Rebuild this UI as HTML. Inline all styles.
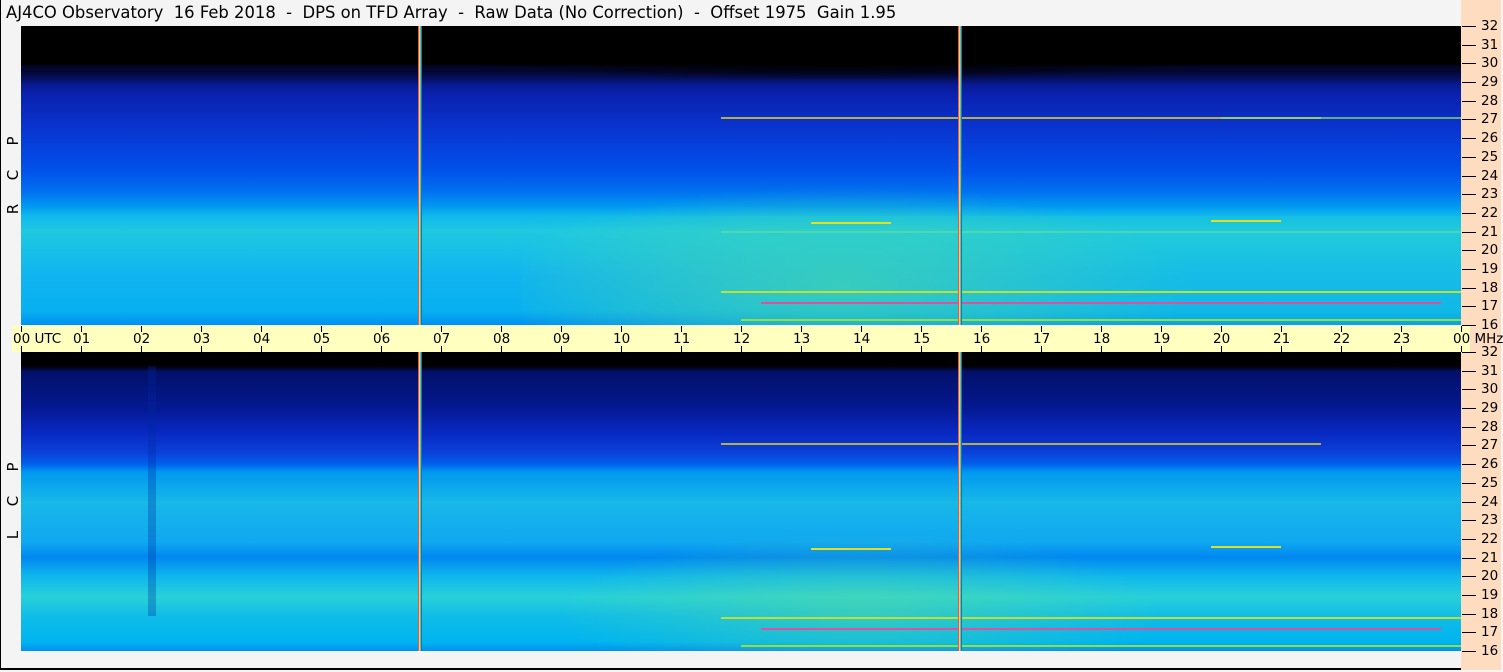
<!DOCTYPE html>
<html><head><meta charset="utf-8"><style>
html,body{margin:0;padding:0}
body{width:1503px;height:672px;position:relative;overflow:hidden;background:#f4f4f5;font-family:"DejaVu Sans","Liberation Sans",sans-serif}
.frame{position:absolute;left:0;top:0;width:1501px;height:670px;border-left:1px solid #000;border-bottom:2px solid #000;box-sizing:border-box}
.title{position:absolute;left:6px;top:3px;font-size:16.4px;color:#000;white-space:pre}
.right{position:absolute;left:1461px;top:0;width:40px;height:670px;background:#fddcc0}
.plot{position:absolute;left:21px;width:1440px;height:299px;overflow:hidden}
#p1{top:26px;background:linear-gradient(to bottom,#000 0px,#000 38px,#06127a 46px,#0a22b0 70px,#0a30c8 95px,#0640dc 120px,#0052ea 145px,#0070f0 165px,#0098f0 180px,#10b8ec 190px,#20c8e0 205px,#18c0e8 225px,#10b4f0 250px,#08b0f0 285px,#0090f0 299px)}
#p2{top:352px;background:linear-gradient(to bottom,#000 0,#000 14px,#02106a 20px,#041890 55px,#0828c0 80px,#0a40d8 100px,#0060ec 112px,#0098f0 120px,#18b8e8 150px,#10a8f0 190px,#0088f0 205px,#10b8ec 225px,#28d0d8 245px,#10bce8 265px,#00b4f0 290px,#0090f0 299px)}
.ov{position:absolute}
.vl{position:absolute;top:0;height:299px;width:4px;background:linear-gradient(to right,#ff4090 0,#ff4090 1px,#f0e020 1px,#f0e020 2px,#40e060 2px,#40e060 3px,#2060ff 3px)}
.hl{position:absolute;height:2px}
.axis{position:absolute;left:12px;top:326px;width:1458px;height:26px;background:#ffffc0}
.tk{position:absolute;width:1px;background:#000}
.lab{position:absolute;font-size:13.5px;color:#000;white-space:pre}
.side{position:absolute;left:3px;font-size:15px;color:#000;width:20px;text-align:center;line-height:20px;transform:rotate(-90deg)}
</style></head><body>
<div class="frame"></div>
<div class="title">AJ4CO Observatory  16 Feb 2018  -  DPS on TFD Array  -  Raw Data (No Correction)  -  Offset 1975  Gain 1.95</div>
<div class="right"></div>

<div class="plot" id="p1">
 <div class="ov" style="left:0;top:0;width:1440px;height:80px;background:radial-gradient(ellipse 500px 45px at 820px 10px,#000 60%,rgba(0,0,0,0) 100%)"></div>
 <div class="ov" style="left:0;top:0;width:1440px;height:100px;background:linear-gradient(to bottom,rgba(0,0,0,0) 40px,rgba(0,0,0,.6) 45px,rgba(0,0,0,0) 60px)"></div>
 <div class="ov" style="left:500px;top:160px;width:940px;height:139px;background:radial-gradient(ellipse 350px 100px at 320px 100px,rgba(120,230,120,.45),rgba(80,220,180,0) 100%)"></div>
 <div class="ov" style="left:500px;top:190px;width:940px;height:109px;background:linear-gradient(to right,rgba(40,210,200,0),rgba(40,210,200,.25) 250px)"></div>
 <div class="hl" style="left:700px;top:91px;width:600px;background:#e0d020;opacity:.8"></div>
 <div class="hl" style="left:1200px;top:91px;width:240px;background:#90e060;opacity:.7"></div>
 <div class="hl" style="left:700px;top:265px;width:740px;background:#c0e030"></div>
 <div class="hl" style="left:740px;top:276px;width:680px;background:#e050a0"></div>
 <div class="hl" style="left:720px;top:293px;width:720px;background:#90e040"></div>
 <div class="hl" style="left:790px;top:196px;width:80px;background:#e0e020"></div>
 <div class="hl" style="left:1190px;top:194px;width:70px;background:#e0e020"></div>
 <div class="hl" style="left:700px;top:205px;width:740px;background:#60e0a0;opacity:.6"></div>
 <div class="vl" style="left:397px"></div>
 <div class="vl" style="left:937px"></div>
</div>

<div class="plot" id="p2">
 <div class="ov" style="left:127px;top:14px;width:8px;height:250px;background:rgba(0,40,160,.3)"></div>
 <div class="ov" style="left:500px;top:180px;width:940px;height:119px;background:radial-gradient(ellipse 300px 80px at 340px 80px,rgba(120,230,120,.35),rgba(80,220,180,0) 100%)"></div>
 <div class="hl" style="left:700px;top:91px;width:600px;background:#e0d020;opacity:.8"></div>
 <div class="hl" style="left:700px;top:265px;width:740px;background:#c0e030"></div>
 <div class="hl" style="left:740px;top:276px;width:680px;background:#e050a0"></div>
 <div class="hl" style="left:720px;top:293px;width:720px;background:#90e040"></div>
 <div class="hl" style="left:790px;top:196px;width:80px;background:#e0e020"></div>
 <div class="hl" style="left:1190px;top:194px;width:70px;background:#e0e020"></div>
 <div class="vl" style="left:397px"></div>
 <div class="vl" style="left:937px"></div>
</div>

<div class="axis"></div>
<div id="ticks"></div>

<div class="side" style="top:131px">P</div>
<div class="side" style="top:165px">C</div>
<div class="side" style="top:199px">R</div>
<div class="side" style="top:457px">P</div>
<div class="side" style="top:491px">C</div>
<div class="side" style="top:525px">L</div>

<script>
var h='';
var labs=['00 UTC','01','02','03','04','05','06','07','08','09','10','11','12','13','14','15','16','17','18','19','20','21','22','23','00 MHz'];
for(var i=0;i<=24;i++){var x=21+i*60;
 h+='<div class="tk" style="left:'+x+'px;top:326px;height:6px"></div><div class="tk" style="left:'+x+'px;top:346px;height:6px"></div>';
 h+='<div class="lab" style="left:'+(x-8)+'px;top:331px">'+labs[i]+'</div>';}
for(var m=32;m>=16;m--){
 var y1=26+(32-m)*18.69, y2=352+(32-m)*18.69;
 [y1,y2].forEach(function(y){
  h+='<div style="position:absolute;left:1462px;top:'+Math.round(y)+'px;width:14px;height:1px;background:#000"></div>';
  h+='<div class="lab" style="left:1481px;top:'+Math.round(y-8)+'px">'+m+'</div>';});
}
document.getElementById('ticks').innerHTML=h;
</script>
</body></html>
